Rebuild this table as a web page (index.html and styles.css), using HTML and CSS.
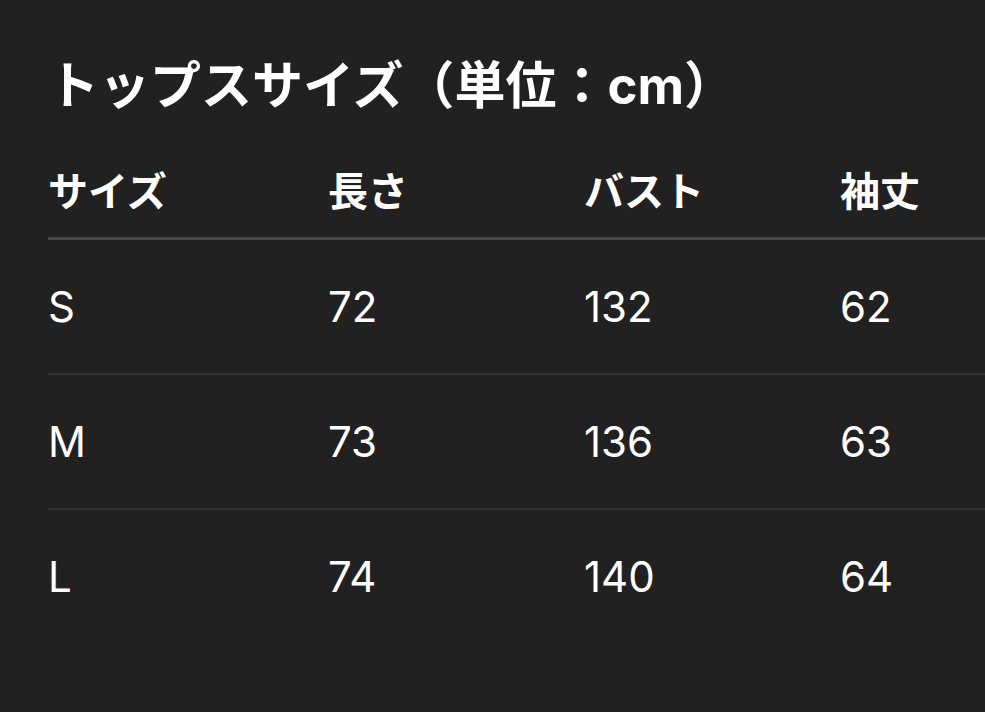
FILE: index.html
```html
<!DOCTYPE html>
<html lang="ja">
<head>
<meta charset="utf-8">
<link rel="stylesheet" href="styles.css">
</head>
<body>
<main class="page">
  <h1 class="title">トップスサイズ（単位：cm）</h1>
  <div class="table">
    <div class="row head">
      <div class="cell">サイズ</div>
      <div class="cell">長さ</div>
      <div class="cell">バスト</div>
      <div class="cell">袖丈</div>
    </div>
    <div class="row">
      <div class="cell">S</div>
      <div class="cell">72</div>
      <div class="cell">132</div>
      <div class="cell">62</div>
    </div>
    <div class="row">
      <div class="cell">M</div>
      <div class="cell">73</div>
      <div class="cell">136</div>
      <div class="cell">63</div>
    </div>
    <div class="row last">
      <div class="cell">L</div>
      <div class="cell">74</div>
      <div class="cell">140</div>
      <div class="cell">64</div>
    </div>
  </div>
</main>
</body>
</html>
```

FILE: styles.css
```css
html, body {
  margin: 0;
  background: #212121;
}
body {
  color: #ffffff;
  font-family: "Inter", "Noto Sans CJK JP", sans-serif;
}
.page {
  padding: 58px 0 0 48px;
}
.title {
  margin: 0;
  font-size: 51px;
  line-height: 56px;
  font-weight: 700;
}
.table {
  margin-top: 26px;
}
.row {
  display: grid;
  grid-template-columns: 280px 256px 256px 1fr;
  align-items: center;
  height: 133px;
  border-bottom: 2px solid #323232;
  font-size: 42px;
  font-weight: 400;
}
.row.head {
  height: 97px;
  border-bottom: 3px solid #474747;
  font-size: 40px;
  font-weight: 700;
}
.row.last {
  border-bottom: none;
}
.cell {
  white-space: nowrap;
}
```
